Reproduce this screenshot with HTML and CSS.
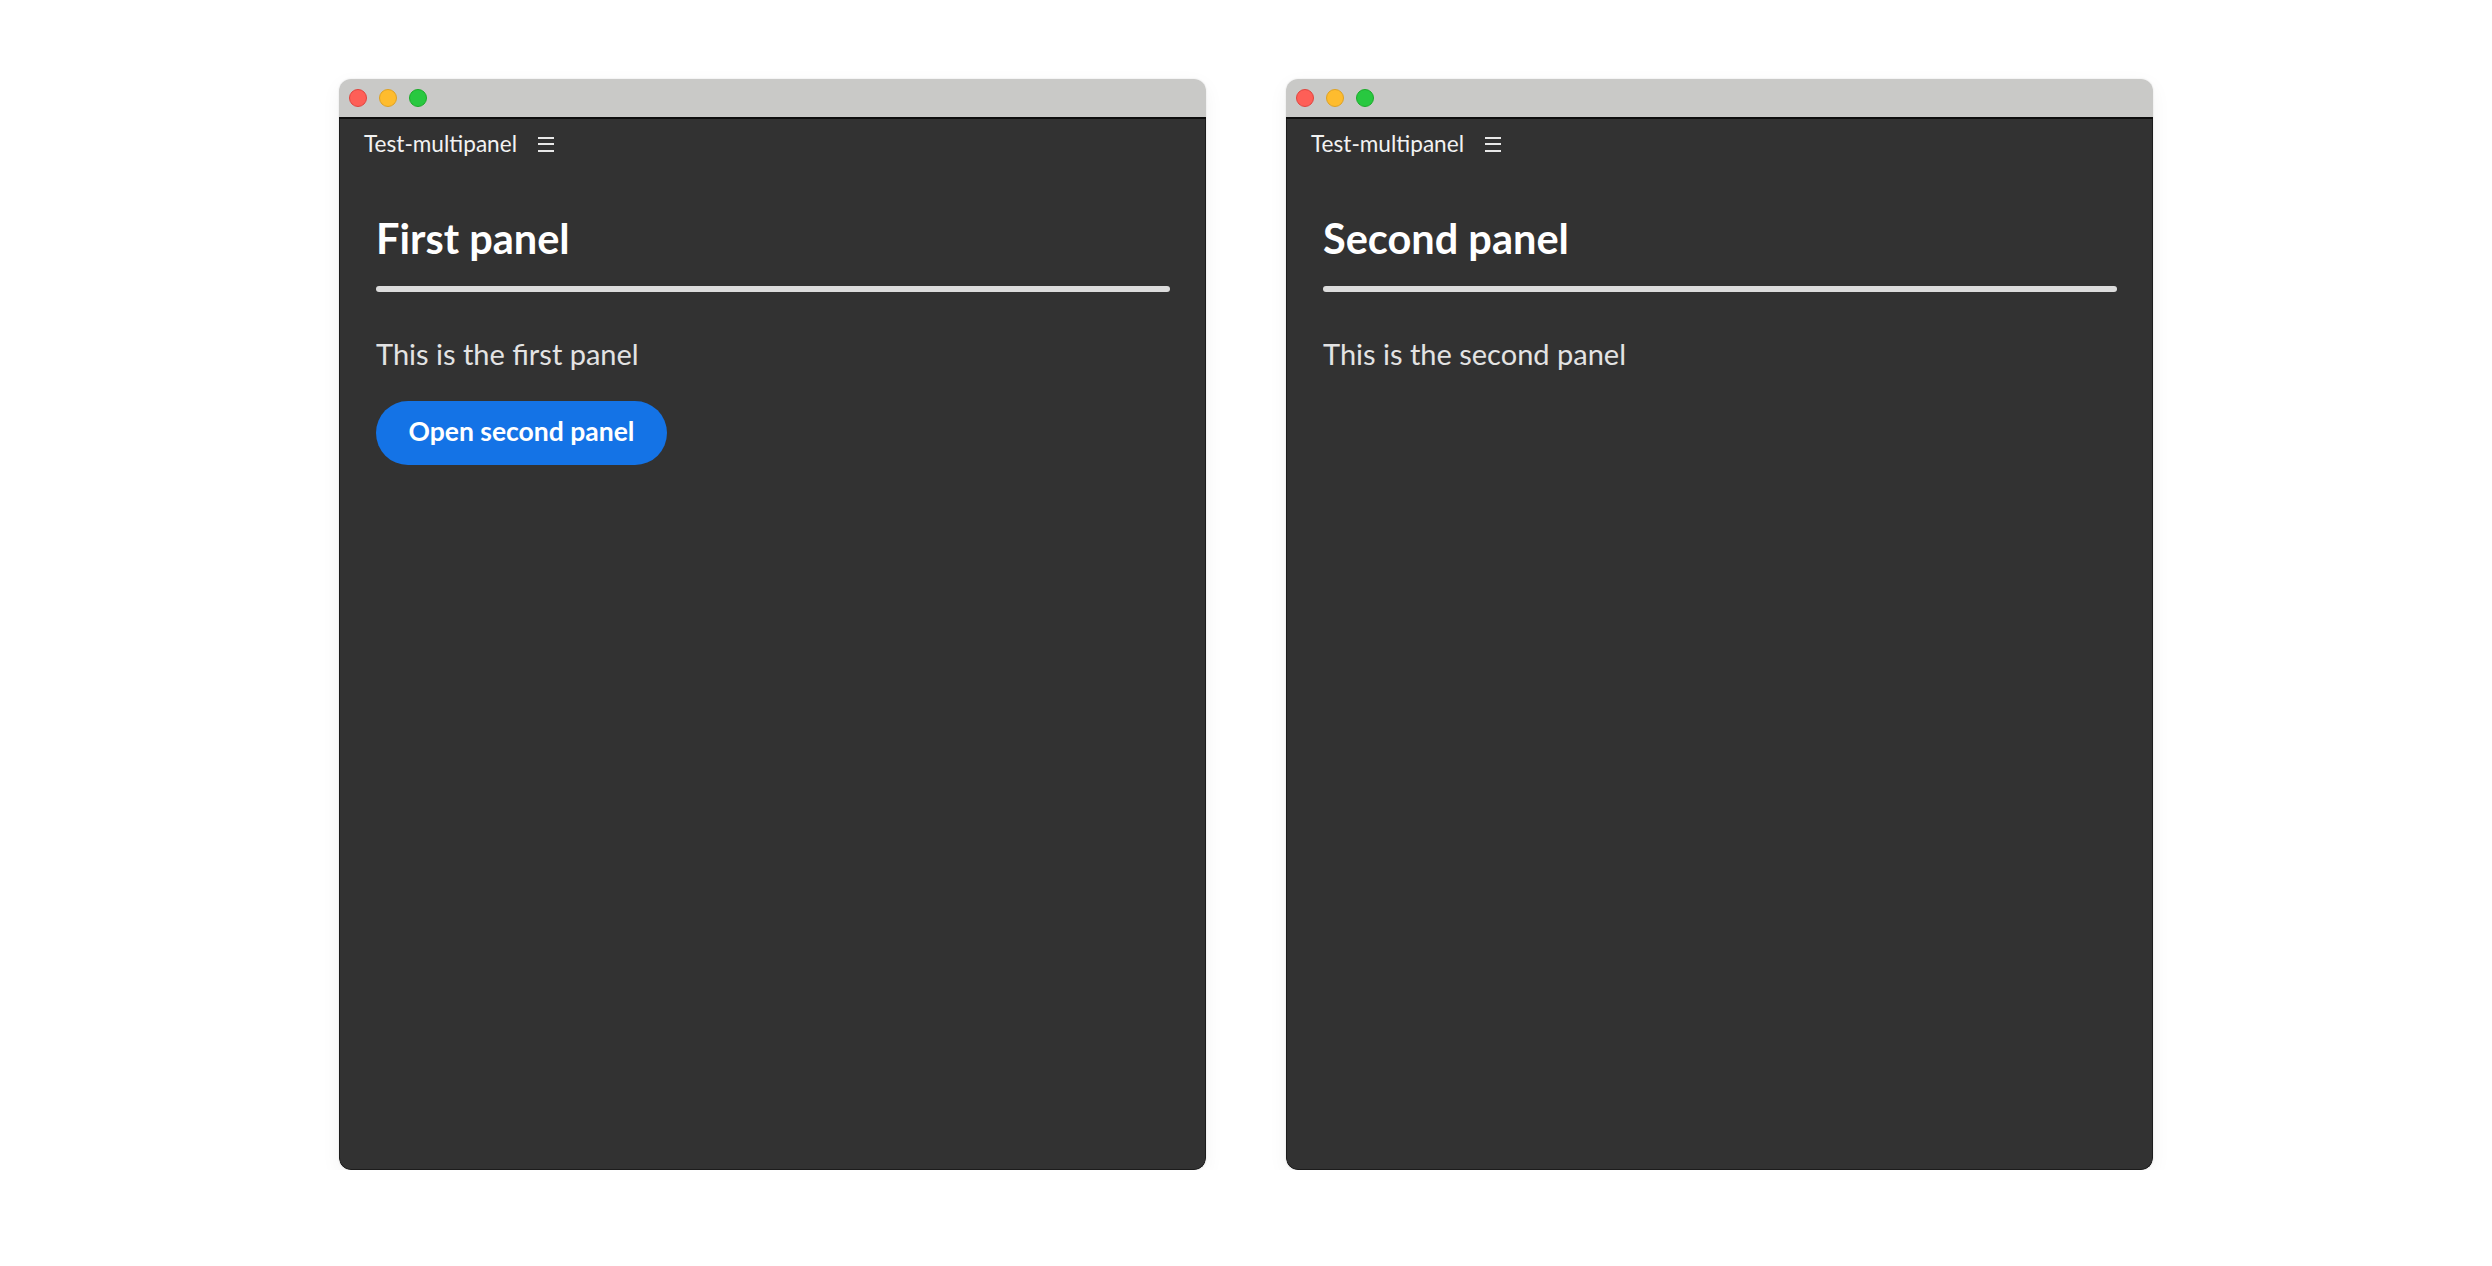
FILE: index.html
```html
<!DOCTYPE html>
<html>
<head>
<meta charset="utf-8">
<link rel="stylesheet" href="styles.css">
</head>
<body>
<div class="stage">
  <div class="window">
    <div class="titlebar">
      <span class="light red"></span><span class="light yellow"></span><span class="light green"></span>
    </div>
    <div class="content">
      <div class="tabbar">
        <span class="tabname">Test-multipanel</span>
        <span class="menu"><i></i><i></i><i></i></span>
      </div>
      <div class="panel">
        <h1 class="heading">First panel</h1>
        <div class="rule"></div>
        <p class="body">This is the first panel</p>
        <button class="cta">Open second panel</button>
      </div>
    </div>
  </div>
  <div class="window">
    <div class="titlebar">
      <span class="light red"></span><span class="light yellow"></span><span class="light green"></span>
    </div>
    <div class="content">
      <div class="tabbar">
        <span class="tabname">Test-multipanel</span>
        <span class="menu"><i></i><i></i><i></i></span>
      </div>
      <div class="panel">
        <h1 class="heading">Second panel</h1>
        <div class="rule"></div>
        <p class="body">This is the second panel</p>
      </div>
    </div>
  </div>
</div>
</body>
</html>
```
FILE: styles.css
```css
html, body {
  margin: 0;
  padding: 0;
  background: #ffffff;
  font-family: "Lato", "Open Sans", sans-serif;
}
.stage {
  display: flex;
  justify-content: center;
  gap: 80px;
  padding-top: 79px;
}
.window {
  width: 867px;
  height: 1091px;
  border-radius: 12px;
  overflow: hidden;
  display: flex;
  flex-direction: column;
  box-shadow: 0 6px 20px rgba(0,0,0,0.05), 0 0 2px rgba(0,0,0,0.12);
}
.titlebar {
  height: 37.5px;
  flex: none;
  background: #c9c9c7;
  border-bottom: 2px solid #0d0d0d;
  display: flex;
  align-items: center;
  gap: 12px;
  padding-left: 10px;
}
.light {
  width: 18px;
  height: 18px;
  border-radius: 50%;
  box-sizing: border-box;
}
.red { background: #fe5f57; border: 1px solid #e0443e; }
.yellow { background: #febc2e; border: 1px solid #dea123; }
.green { background: #28c840; border: 1px solid #1aab29; }
.content {
  flex: 1;
  background: #323232;
  border: 1px solid #1c1c1c;
  border-top: none;
  border-radius: 0 0 12px 12px;
}
.tabbar {
  display: flex;
  align-items: center;
  height: 50px;
  padding-left: 24px;
  gap: 21px;
}
.tabname {
  color: #f2f2f2;
  font-size: 22.6px;
  line-height: 50px;
}
.menu {
  display: flex;
  flex-direction: column;
  gap: 4.5px;
  width: 16px;
  margin-top: 1px;
}
.menu i {
  display: block;
  height: 2px;
  background: #e8e8e8;
}
.panel {
  padding: 0 35px 0 36px;
}
.heading {
  margin: 44px 0 0;
  color: #ffffff;
  font-size: 41.5px;
  font-weight: 700;
  line-height: 50px;
}
.rule {
  height: 6px;
  border-radius: 3px;
  background: #dcdcdc;
  margin-top: 23px;
}
.body {
  margin: 44px 0 0;
  color: #e3e3e3;
  font-size: 29px;
  line-height: 36px;
}
.cta {
  display: block;
  margin-top: 29px;
  height: 64px;
  width: 291px;
  border: none;
  border-radius: 32px;
  background: #1473e6;
  color: #ffffff;
  font-family: "Lato", "Open Sans", sans-serif;
  font-weight: 700;
  font-size: 26.5px;
  padding: 0 0 3px;
}
```
